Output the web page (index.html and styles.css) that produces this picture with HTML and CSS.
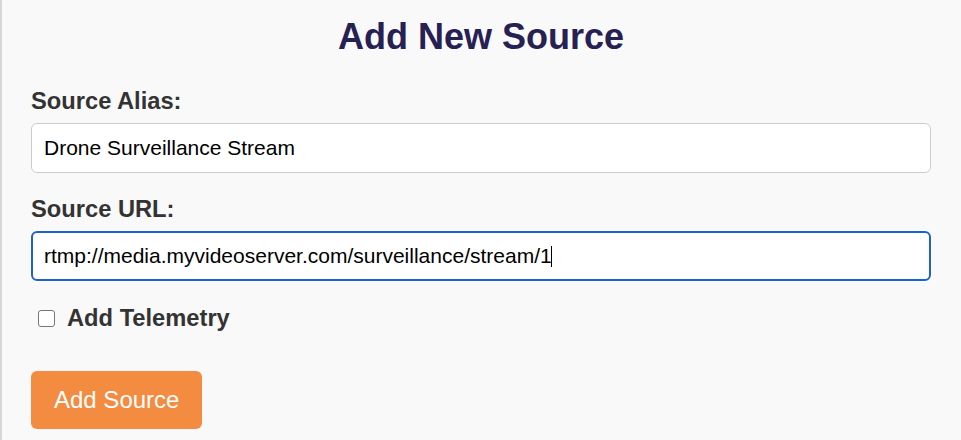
FILE: index.html
```html
<!DOCTYPE html>
<html lang="en">
<head>
<meta charset="utf-8">
<title>Add New Source</title>
<link rel="stylesheet" href="styles.css">
</head>
<body>
<form class="panel">
  <h1 class="title">Add New Source</h1>
  <label class="label" for="alias">Source Alias:</label>
  <input class="field" id="alias" type="text" value="Drone Surveillance Stream">
  <label class="label label-second" for="url">Source URL:</label>
  <div class="field-wrap">
    <input class="field field-focus" id="url" type="text" value="rtmp://media.myvideoserver.com/surveillance/stream/1">
    <span class="caret"></span>
  </div>
  <label class="check-row">
    <input class="check" type="checkbox">
    <span class="check-text">Add Telemetry</span>
  </label>
  <div class="actions">
    <button class="btn" type="button">Add Source</button>
  </div>
</form>
</body>
</html>
```
FILE: styles.css
```css
* { box-sizing: border-box; }
html, body {
  margin: 0;
  padding: 0;
  background: #f9f9f9;
  font-family: "Liberation Sans", Arial, Helvetica, sans-serif;
}
.panel {
  display: flex;
  flex-direction: column;
  align-items: stretch;
  min-height: 440px;
  padding: 15px 30px 0 29px;
  border-left: 2px solid #d6d6d6;
  background: #f9f9f9;
}
.title {
  margin: 0;
  font-size: 36px;
  line-height: 44px;
  font-weight: 700;
  color: #272052;
  text-align: center;
}
.label {
  display: block;
  margin-top: 28px;
  font-size: 23.7px;
  line-height: 28px;
  font-weight: 700;
  color: #333333;
}
.label-second { margin-top: 22px; }
.field {
  display: block;
  width: 100%;
  height: 50px;
  margin-top: 8px;
  padding: 0 12px;
  border: 1px solid #cccccc;
  border-radius: 6px;
  background: #ffffff;
  font-family: "Liberation Sans", Arial, Helvetica, sans-serif;
  font-size: 21px;
  color: #000000;
  outline: none;
}
.field-wrap {
  position: relative;
  margin-top: 8px;
}
.field-wrap .field { margin-top: 0; }
.field-focus {
  border: 2px solid #1a62cf;
  padding: 0 11px;
  box-shadow: 0 0 0 1px #ffffff;
}
.caret {
  position: absolute;
  left: 520px;
  top: 15px;
  width: 1px;
  height: 21px;
  background: #000000;
}
.check-row {
  display: flex;
  align-items: center;
  gap: 12px;
  margin-top: 23px;
  padding-left: 7px;
  font-size: 23.7px;
  line-height: 28px;
  font-weight: 700;
  color: #333333;
}
.check {
  appearance: none;
  -webkit-appearance: none;
  width: 17px;
  height: 17px;
  margin: 0;
  border: 1px solid #767676;
  border-radius: 3px;
  background: #ffffff;
  flex: none;
}
.actions {
  display: flex;
  margin-top: 39px;
}
.btn {
  padding: 15px 23px;
  border: none;
  border-radius: 6px;
  background: #f38b41;
  color: #ffffff;
  font-family: "Liberation Sans", Arial, Helvetica, sans-serif;
  font-size: 24px;
  line-height: 28px;
  font-weight: 400;
  cursor: pointer;
}
```
